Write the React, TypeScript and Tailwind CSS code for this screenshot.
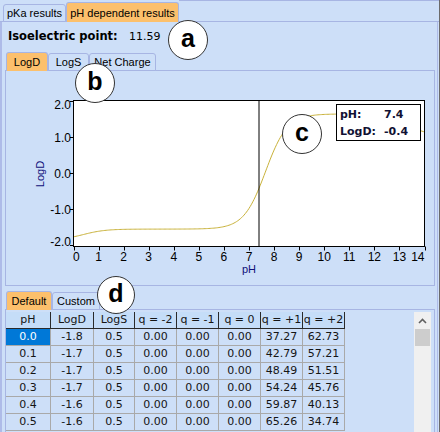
import React from "react";

const ui = "font-['Liberation_Sans',Arial,sans-serif]";
const dv = "font-['DejaVu_Sans',Verdana,sans-serif]";

type TabProps = { label: string; active?: boolean; className: string };

function Tab({ label, active, className }: TabProps) {
  return (
    <div
      className={`-mb-px flex items-center justify-center rounded-t-[3px] border border-[#a7b5e3] text-[11px] leading-none text-black ${
        active ? "relative z-10 border-b-0 bg-[#fcc06c]" : "bg-[#cddff8]"
      } ${className}`}
    >
      {label}
    </div>
  );
}

// logD curve, roughly fitted to the plotted data
function logD(ph: number) {
  const s = (x: number) => 1 / (1 + Math.pow(10, -x));
  return -1.85 + 0.3 * s(ph - 0.4) + 3.2 * s(ph - 7.66) - 0.6 * s(ph - 13.3);
}
const X = (ph: number) => 73.5 + ph * (351 / 14);
const Y = (v: number) => 173.3 - 36 * v;

function Chart() {
  const pts: string[] = [];
  for (let i = 0; i <= 280; i++) {
    const ph = i * 0.05;
    pts.push(`${X(ph).toFixed(2)},${Y(logD(ph)).toFixed(2)}`);
  }
  const yTicks = [2, 1, 0, -1, -2];
  const yLabel = (v: number) => (v === 2 ? 108.5 : v === -2 ? 245.5 : Y(v) + 4.3);
  return (
    <svg width={428} height={214} viewBox="6 71 428 214" className="block">
      <defs>
        <clipPath id="plot">
          <rect x={74} y={101} width={350} height={145} />
        </clipPath>
      </defs>
      <rect x={73.5} y={100.5} width={351} height={146} fill="#fff" stroke="#000" />
      <polyline
        points={pts.join(" ")}
        fill="none"
        stroke="#c9b23a"
        strokeWidth={1}
        clipPath="url(#plot)"
      />
      <line x1={259} y1={100.5} x2={259} y2={246.5} stroke="#000" />
      {yTicks.map((v) => (
        <g key={v}>
          <line x1={70} x2={73.5} y1={Math.round(Y(v)) + 0.5} y2={Math.round(Y(v)) + 0.5} stroke="#000" />
          <text
            x={71}
            y={yLabel(v)}
            textAnchor="end"
            fontFamily="Liberation Sans, Arial, sans-serif"
            fontSize={12}
            fill="#000"
          >
            {v.toFixed(1)}
          </text>
        </g>
      ))}
      {Array.from({ length: 15 }, (_, i) => (
        <g key={i}>
          <line x1={Math.round(X(i)) + 0.5} x2={Math.round(X(i)) + 0.5} y1={246.5} y2={250.5} stroke="#000" />
          <text
            x={i === 0 ? 73 : i === 14 ? 424.5 : X(i)}
            y={261}
            textAnchor={i === 0 ? "start" : i === 14 ? "end" : "middle"}
            fontFamily="Liberation Sans, Arial, sans-serif"
            fontSize={12}
            fill="#000"
          >
            {i}
          </text>
        </g>
      ))}
      <text
        x={249}
        y={272.5}
        textAnchor="middle"
        fontFamily="Liberation Sans, Arial, sans-serif"
        fontSize={11}
        fill="#10107a"
      >
        pH
      </text>
      <text
        transform="translate(43.5,174) rotate(-90)"
        textAnchor="middle"
        fontFamily="Liberation Sans, Arial, sans-serif"
        fontSize={11}
        fill="#10107a"
      >
        LogD
      </text>
    </svg>
  );
}

const headers = ["pH", "LogD", "LogS", "q = -2", "q = -1", "q = 0", "q = +1", "q = +2"];
const rows = [
  ["0.0", "-1.8", "0.5", "0.00", "0.00", "0.00", "37.27", "62.73"],
  ["0.1", "-1.7", "0.5", "0.00", "0.00", "0.00", "42.79", "57.21"],
  ["0.2", "-1.7", "0.5", "0.00", "0.00", "0.00", "48.49", "51.51"],
  ["0.3", "-1.7", "0.5", "0.00", "0.00", "0.00", "54.24", "45.76"],
  ["0.4", "-1.6", "0.5", "0.00", "0.00", "0.00", "59.87", "40.13"],
  ["0.5", "-1.6", "0.5", "0.00", "0.00", "0.00", "65.26", "34.74"],
];

function Marker({ letter, className }: { letter: string; className: string }) {
  return (
    <div
      className={`absolute z-20 flex items-center justify-center rounded-full border border-[#333] bg-white pb-[3px] text-[25px] font-bold leading-none text-black ${ui} ${className}`}
    >
      {letter}
    </div>
  );
}

export default function App() {
  return (
    <div className={`relative h-[432px] w-[440px] overflow-hidden border-r border-[#6b6b6b] bg-[#cddff8] ${ui}`}>
      {/* top tabs */}
      <div className="flex h-[22px] items-end border-b border-[#a7b5e3]">
        <div className="w-[3px]" />
        <Tab label="pKa results" className="h-[18px] w-[63px]" />
        <Tab label="pH dependent results" active className="h-[20px] w-[113px] pt-[1px]" />
        <div className="h-px flex-1 self-start bg-[#a7b5e3]" />
      </div>

      <div className="h-[410px] w-[438px] border-l-2 border-r border-[#aebbe8]">
        <div className={`flex h-[30px] items-center pl-[6px] text-[11.5px] text-black ${dv}`}>
          <span className="inline-block w-[121px] font-bold">Isoelectric point:</span>
          <span className="text-[11px]">11.59</span>
        </div>

        {/* LogD / LogS / Net Charge */}
        <div className="ml-[3px] w-[430px]">
          <div className="flex h-[19px] items-end border-b border-[#a7b5e3] pl-px">
            <Tab label="LogD" active className="h-[19px] w-[42px] pt-px" />
            <Tab label="LogS" className="h-[18px] w-[41px]" />
            <Tab label="Net Charge" className="h-[18px] w-[67px]" />
          </div>
          <div className="h-[215px] border-x border-b border-[#a7b5e3]">
            <Chart />
          </div>
        </div>

        {/* Default / Custom */}
        <div className="ml-[3px] mt-[5px] w-[430px]">
          <div className="flex h-[19px] items-end border-b border-[#a7b5e3] pl-px">
            <Tab label="Default" active className="h-[19px] w-[46px] pt-px" />
            <Tab label="Custom" className="h-[18px] w-[48px]" />
          </div>
          <div className="flex h-[122px] border-x border-[#a7b5e3] pt-[2px]">
            <div className={`grid h-fit grid-cols-[45px_43px_41px_42px_42px_42px_42px_42px] text-[11px] text-[#151515] ${dv}`}>
              {headers.map((h) => (
                <div
                  key={h}
                  className="flex h-[17px] items-center justify-center whitespace-pre border-b border-r border-[#2a2a2a] bg-[#c5ddf8]"
                >
                  {h}
                </div>
              ))}
              {rows.map((r, ri) =>
                r.map((c, ci) => (
                  <div
                    key={`${ri}-${ci}`}
                    className={`flex h-[17px] items-center justify-center border-b border-r border-[#a9a9a9] ${
                      ri === 0 && ci === 0 ? "bg-[#0078d7] text-white" : ""
                    }`}
                  >
                    {c}
                  </div>
                ))
              )}
            </div>
            <div className="flex-1" />
            <div className="mr-[3px] w-[17px] bg-[#f0f0f0]">
              <div className="flex h-[17px] items-center justify-center">
                <svg width="9" height="6" viewBox="0 0 9 6">
                  <path d="M1 5 L4.5 1.5 L8 5" fill="none" stroke="#606060" strokeWidth="1.6" />
                </svg>
              </div>
              <div className="mx-px h-[17px] bg-[#cdcdcd]" />
            </div>
          </div>
        </div>
      </div>

      {/* chart tooltip */}
      <div
        className={`absolute left-[336px] top-[104px] z-10 grid h-[37px] w-[85px] grid-cols-[44px_auto] border border-black bg-white pl-[3px] pt-[2px] text-[11px] font-bold leading-[16px] text-[#111133] ${dv}`}
      >
        <span>pH:</span>
        <span>7.4</span>
        <span>LogD:</span>
        <span>-0.4</span>
      </div>

      <Marker letter="a" className="left-[168px] top-[20px] h-[40px] w-[40px]" />
      <Marker letter="b" className="left-[75px] top-[63px] h-[40px] w-[40px]" />
      <Marker letter="c" className="left-[282px] top-[114px] h-[40px] w-[40px]" />
      <Marker letter="d" className="left-[97px] top-[276px] h-[38px] w-[38px]" />
    </div>
  );
}
